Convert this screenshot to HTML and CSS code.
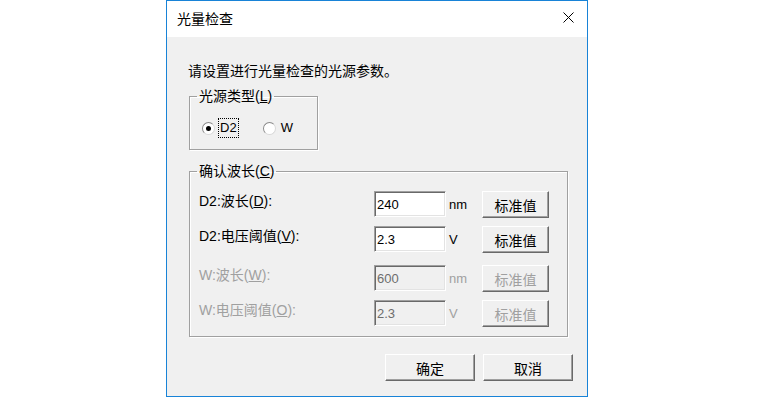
FILE: index.html
```html
<!DOCTYPE html>
<html lang="zh-CN">
<head>
  <meta charset="UTF-8" />
  <title>光量检查</title>
  <link rel="stylesheet" href="styles.css">
</head>
<body>
  <div class="dialog">
    <div class="titlebar">
      <span class="title">光量检查</span>
      <svg class="close" width="11" height="11" viewBox="0 0 11 11">
        <path d="M0.5 0.5 L10.5 10.5 M10.5 0.5 L0.5 10.5" stroke="#000" stroke-width="1" fill="none" />
      </svg>
    </div>

    <div class="content">
      <p class="prompt">请设置进行光量检查的光源参数。</p>

      <fieldset class="group group-type">
        <legend>光源类型(<u>L</u>)</legend>
        <div class="radios">
          <span class="radio checked"></span>
          <span class="radio-label focus">D2</span>
          <span class="radio"></span>
          <span class="radio-label">W</span>
        </div>
      </fieldset>

      <fieldset class="group group-wave">
        <legend>确认波长(<u>C</u>)</legend>
        <div class="row">
          <span class="label">D2:波长(<u>D</u>):</span>
          <input class="edit" type="text" value="240">
          <span class="unit">nm</span>
          <button class="btn">标准值</button>
        </div>
        <div class="row row-2">
          <span class="label">D2:电压阈值(<u>V</u>):</span>
          <input class="edit" type="text" value="2.3">
          <span class="unit">V</span>
          <button class="btn">标准值</button>
        </div>
        <div class="row row-3 disabled">
          <span class="label">W:波长(<u>W</u>):</span>
          <input class="edit" type="text" value="600" disabled>
          <span class="unit">nm</span>
          <button class="btn" disabled>标准值</button>
        </div>
        <div class="row row-4 disabled">
          <span class="label">W:电压阈值(<u>O</u>):</span>
          <input class="edit" type="text" value="2.3" disabled>
          <span class="unit">V</span>
          <button class="btn" disabled>标准值</button>
        </div>
      </fieldset>

      <div class="footer">
        <button class="btn btn-wide">确定</button>
        <button class="btn btn-wide">取消</button>
      </div>
    </div>
  </div>
</body>
</html>
```

FILE: styles.css
```css
body {
  margin: 0;
  background-color: #ffffff;
  font-family: "Liberation Sans", "Noto Sans CJK SC", sans-serif;
  font-size: 14px;
  line-height: 16px;
  color: #000000;
}

.dialog {
  margin-left: 166px;
  width: 422px;
  height: 397px;
  box-sizing: border-box;
  border: 1px solid #1883d7;
  display: flex;
  flex-direction: column;
}

.titlebar {
  height: 36px;
  flex-shrink: 0;
  background-color: #ffffff;
  display: flex;
  align-items: center;
  justify-content: space-between;
  padding: 0 13px 0 10px;
}

.close {
  display: block;
  margin-top: -3px;
}

.content {
  flex: 1;
  background-color: #f0f0f0;
  padding: 26px 0 0 21px;
}

.prompt {
  margin: 0;
}

.group {
  margin: 0 0 0 1px;
  border: 1px solid #a0a0a0;
  box-shadow: inset 1px 1px 0 #ffffff, 1px 1px 0 #ffffff;
  box-sizing: border-box;
  min-width: 0;
}

.group legend {
  padding: 0 2px;
}

.group-type {
  width: 129px;
  margin-top: 9px;
  padding: 16px 0 13px 7px;
}

.group-wave {
  width: 379px;
  margin-top: 13px;
  padding: 12px 0 9px 7px;
}

.radios {
  display: flex;
  align-items: center;
  height: 16px;
  padding-left: 5px;
}

.radio {
  flex-shrink: 0;
  width: 13px;
  height: 13px;
  box-sizing: border-box;
  border-radius: 50%;
  border: 1px solid;
  border-color: #8a8a8a #d8d8d8 #d8d8d8 #8a8a8a;
  background-color: #ffffff;
  position: relative;
  margin-right: 4px;
}

.radio.checked::after {
  content: "";
  position: absolute;
  left: 3px;
  top: 3px;
  width: 5px;
  height: 5px;
  border-radius: 50%;
  background-color: #000000;
}

.radio-label {
  flex-shrink: 0;
  font-size: 13px;
  padding: 1px 1px;
  margin-right: 25px;
}

.radio-label.focus {
  outline: 1px dotted #000000;
}

.row {
  display: grid;
  grid-template-columns: 175px 72px 36px 67px;
  align-items: center;
  height: 27px;
  margin-left: 2px;
}

.row-2 { margin-top: 8px; }
.row-3 { margin-top: 12px; }
.row-4 { margin-top: 8px; }

.label {
  align-self: start;
  padding-top: 2px;
}

.edit {
  width: 72px;
  height: 26px;
  box-sizing: border-box;
  margin: 0;
  padding: 0 2px;
  font-family: "Liberation Sans", sans-serif;
  font-size: 13px;
  color: #000000;
  background-color: #ffffff;
  border: 1px solid;
  border-color: #a0a0a0 #ffffff #ffffff #a0a0a0;
  box-shadow: inset 1px 1px 0 #696969, inset -1px -1px 0 #e3e3e3;
  outline: none;
  align-self: start;
}

.unit {
  padding-left: 3px;
  font-size: 13px;
}

.btn {
  width: 67px;
  height: 27px;
  box-sizing: border-box;
  margin: 0;
  padding: 0;
  font-family: "Liberation Sans", "Noto Sans CJK SC", sans-serif;
  font-size: 14px;
  color: #000000;
  background-color: #f0f0f0;
  border: 1px solid;
  border-color: #ffffff #696969 #696969 #ffffff;
  box-shadow: inset -1px -1px 0 #a0a0a0;
}

.disabled .label,
.disabled .unit,
.btn:disabled {
  color: #a0a0a0;
}

.edit:disabled {
  background-color: #f0f0f0;
  color: #6d6d6d;
}

.footer {
  display: flex;
  justify-content: flex-end;
  gap: 8px;
  margin-top: 17px;
  padding-right: 14px;
}

.btn-wide {
  width: 90px;
}
```
